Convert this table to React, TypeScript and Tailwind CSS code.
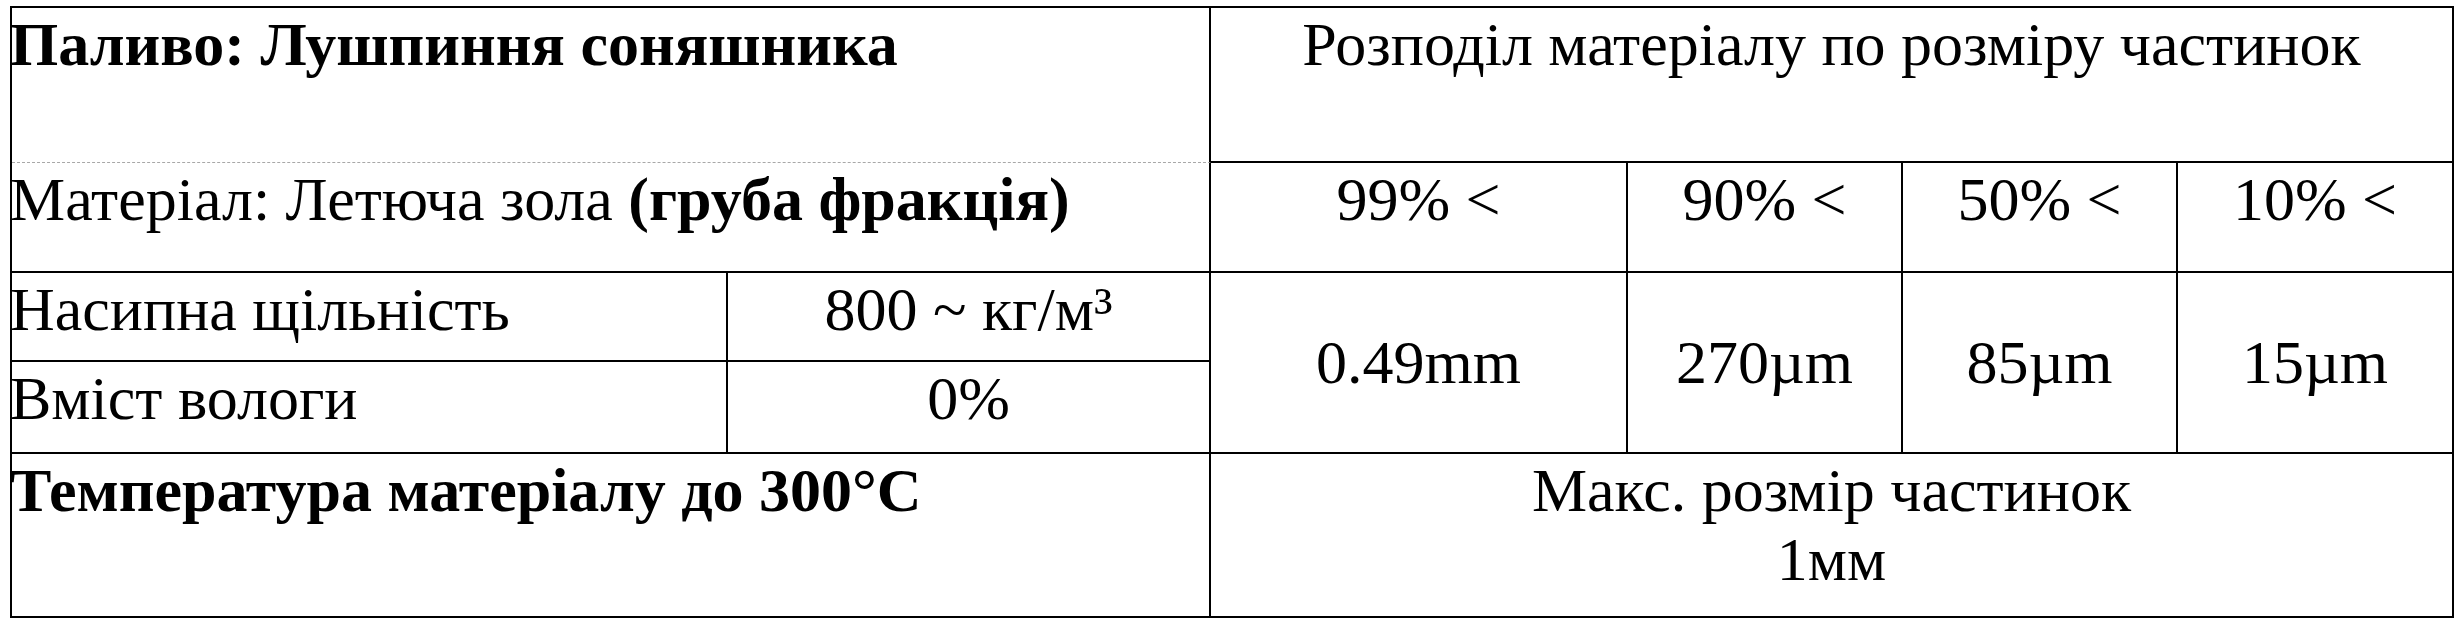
import React from "react";

const cell = "border-r-2 border-b-2 border-black";

export default function App() {
  return (
    <div className="w-[2464px] h-[628px] bg-white pt-[6px] pl-[10px] text-black" style={{ fontFamily: '"Liberation Serif", "Times New Roman", serif' }}>
      <div className="grid w-[2444px] grid-cols-[716px_483px_417px_275px_275px_276px] grid-rows-[155px_110px_89px_92px_164px] border-t-2 border-l-2 border-black text-[62px] leading-[69px]">
        {/* Row 1 */}
        <div className="col-span-2 border-r-2 border-b border-r-black border-b-[#a8a8a8] border-dashed pt-[2px] font-bold whitespace-nowrap" style={{ borderRightStyle: "solid" }}>
          <span className="-ml-[2px]">Паливо: Лушпиння соняшника</span>
        </div>
        <div className={`col-span-4 ${cell} pt-[2px] text-center whitespace-nowrap`}>Розподіл матеріалу по розміру частинок</div>

        {/* Row 2 */}
        <div className={`col-span-2 ${cell} pt-[2px] whitespace-nowrap`}>
          <span className="-ml-[2px]">Матеріал: Летюча зола </span>
          <span className="font-bold">(груба фракція)</span>
        </div>
        <div className={`${cell} pt-[2px] text-center`}>99% &lt;</div>
        <div className={`${cell} pt-[2px] text-center`}>90% &lt;</div>
        <div className={`${cell} pt-[2px] text-center`}>50% &lt;</div>
        <div className={`${cell} pt-[2px] text-center`}>10% &lt;</div>

        {/* Row 3 */}
        <div className={`${cell} pt-[2px] whitespace-nowrap`}>
          <span className="-ml-[2px]">Насипна щільність</span>
        </div>
        <div className={`${cell} pt-[2px] text-center whitespace-nowrap`}>800 ~ кг/м³</div>
        <div className={`row-span-2 ${cell} flex items-center justify-center`}>0.49mm</div>
        <div className={`row-span-2 ${cell} flex items-center justify-center`}>270µm</div>
        <div className={`row-span-2 ${cell} flex items-center justify-center`}>85µm</div>
        <div className={`row-span-2 ${cell} flex items-center justify-center`}>15µm</div>

        {/* Row 4 */}
        <div className={`${cell} pt-[2px]`}>
          <span className="-ml-[2px]">Вміст вологи</span>
        </div>
        <div className={`${cell} pt-[2px] text-center`}>0%</div>

        {/* Row 5 */}
        <div className={`col-span-2 ${cell} pt-[2px] font-bold whitespace-nowrap`}>
          <span className="-ml-[2px]">Температура матеріалу до 300°C</span>
        </div>
        <div className={`col-span-4 ${cell} pt-[2px] text-center`}>
          Макс. розмір частинок
          <br />
          1мм
        </div>
      </div>
    </div>
  );
}
